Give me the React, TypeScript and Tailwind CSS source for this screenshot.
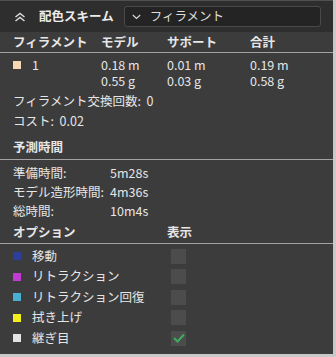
const font = { fontFamily: '"Noto Sans CJK JP", "Noto Sans", sans-serif' };

const legend = [
  { label: "移動", color: "bg-[#2d3f9c]", on: false },
  { label: "リトラクション", color: "bg-[#c13bd2]", on: false },
  { label: "リトラクション回復", color: "bg-[#4aaed2]", on: false },
  { label: "拭き上げ", color: "bg-[#f4ef1c]", on: false },
  { label: "継ぎ目", color: "bg-[#e4e4e4]", on: true },
];

const times = [
  ["準備時間:", "5m28s"],
  ["モデル造形時間:", "4m36s"],
  ["総時間:", "10m4s"],
];

const usage = [
  ["0.18 m", "0.55 g"],
  ["0.01 m", "0.03 g"],
  ["0.19 m", "0.58 g"],
];

export default function App() {
  return (
    <div className="h-[357px] w-[336px] bg-[#c9c9c9]" style={font}>
      <div className="flex h-[354px] w-[333px] flex-col bg-[#3c3c3c] text-[12.5px] text-[#e6e6e6]">
        <div className="flex h-[32px] shrink-0 items-center border-t border-[#505050] bg-[#2e2e2e]">
          <svg width="12" height="10" viewBox="0 0 12 10" className="ml-[14px]" fill="none" stroke="#dcdcdc" strokeWidth="1.4">
            <path d="M1.5 5 L6 1.5 L10.5 5" />
            <path d="M1.5 9 L6 5.5 L10.5 9" />
          </svg>
          <span className="ml-[13px] font-bold text-[#ececec]">配色スキーム</span>
          <div className="ml-[10px] flex h-[21px] w-[197px] items-center rounded-[3px] border border-[#4a4a4a] bg-[#242424]">
            <svg width="9" height="6" viewBox="0 0 9 6" className="ml-[7px]" fill="none" stroke="#d8d8d8" strokeWidth="1.2">
              <path d="M0.8 1 L4.5 4.5 L8.2 1" />
            </svg>
            <span className="ml-[9px] text-[#dedede]">フィラメント</span>
          </div>
        </div>

        <div className="grid h-[21px] grid-cols-[88px_66px_83px_1fr] items-center border-b border-[#a3a3a3] pl-[13px] font-bold">
          <span>フィラメント</span>
          <span>モデル</span>
          <span>サポート</span>
          <span>合計</span>
        </div>

        <div className="mt-[4px] grid grid-cols-[88px_66px_83px_1fr] pl-[13px] leading-[16px]">
          <div className="flex h-[16px] items-center">
            <span className="h-[8px] w-[8px] bg-[#f7d6b6]" />
            <span className="ml-[11px]">1</span>
          </div>
          {usage.map(([m, g]) => (
            <div key={m} className="flex flex-col">
              <span className="h-[16px]">{m}</span>
              <span className="h-[16px]">{g}</span>
            </div>
          ))}
        </div>

        <div className="mt-[2px] pl-[13px] leading-[20px]">
          <div>フィラメント交換回数:&nbsp; 0</div>
          <div>コスト:&nbsp; 0.02</div>
        </div>

        <div className="mt-[4px] border-b border-[#a3a3a3] pl-[13px] font-bold leading-[24px]">予測時間</div>
        <div className="mt-[3px] pl-[13px] leading-[19px]">
          {times.map(([k, v]) => (
            <div key={k} className="grid grid-cols-[97px_1fr]">
              <span>{k}</span>
              <span>{v}</span>
            </div>
          ))}
        </div>

        <div className="grid grid-cols-[154px_1fr] border-b border-[#a3a3a3] pl-[13px] font-bold leading-[23px]">
          <span>オプション</span>
          <span>表示</span>
        </div>
        <div className="mt-[2px] pl-[13px]">
          {legend.map((l) => (
            <div key={l.label} className="grid h-[20.5px] grid-cols-[158px_1fr] items-center">
              <div className="flex items-center">
                <span className={`h-[8px] w-[8px] ${l.color}`} />
                <span className="ml-[11px]">{l.label}</span>
              </div>
              <div className="flex h-[15px] w-[15px] items-center justify-center bg-[#4c4c4c]">
                {l.on && (
                  <svg width="12" height="10" viewBox="0 0 12 10" fill="none" stroke="#3cad5c" strokeWidth="2">
                    <path d="M1 5 L4.5 8.5 L11 1.5" />
                  </svg>
                )}
              </div>
            </div>
          ))}
        </div>
      </div>
    </div>
  );
}
